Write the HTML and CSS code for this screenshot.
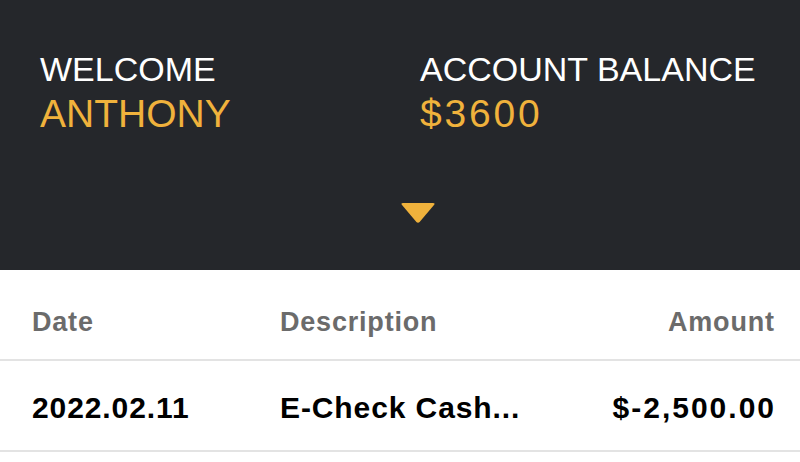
FILE: index.html
```html
<!DOCTYPE html>
<html>
<head>
<meta charset="utf-8">
<link rel="stylesheet" href="styles.css">
</head>
<body>
<header class="hero">
  <div class="stats">
    <div class="stat">
      <div class="label">WELCOME</div>
      <div class="value">ANTHONY</div>
    </div>
    <div class="stat">
      <div class="label">ACCOUNT BALANCE</div>
      <div class="value money">$3600</div>
    </div>
  </div>
  <div class="toggle">
    <svg width="36" height="22" viewBox="0 0 36 22"><path d="M3 1 H33 Q35.5 1 34 3 L19.6 20 Q18 21.6 16.4 20 L2 3 Q0.5 1 3 1 Z" fill="#f0b23c"/></svg>
  </div>
</header>
<section class="table">
  <div class="row head">
    <div class="c-date">Date</div>
    <div class="c-desc">Description</div>
    <div class="c-amt">Amount</div>
  </div>
  <div class="row">
    <div class="c-date">2022.02.11</div>
    <div class="c-desc">E-Check Cash...</div>
    <div class="c-amt">$-2,500.00</div>
  </div>
</section>
</body>
</html>
```
FILE: styles.css
```css
html, body { margin: 0; padding: 0; background: #fff; }
body { width: 800px; height: 462px; overflow: hidden; font-family: "Liberation Sans", Arial, sans-serif; }
.hero { background: #25272b; height: 270px; box-sizing: border-box; padding-top: 50px; display: flex; flex-direction: column; }
.stats { display: grid; grid-template-columns: 1fr 1fr; padding-left: 40px; }
.label { color: #fff; font-size: 34px; line-height: 38px; }
.value { color: #f0b23c; font-size: 39px; line-height: 44px; margin-top: 4px; }
.value.money { letter-spacing: 2.8px; }
.toggle { display: flex; justify-content: center; margin-top: 66px; padding-left: 36px; }
.toggle svg { display: block; }
.table { font-family: "Liberation Sans", Arial, sans-serif; }
.row { display: grid; grid-template-columns: 248px 1fr 220px; box-sizing: border-box; padding: 5px 26px 0 32px; height: 91px; align-items: center; border-bottom: 2px solid #e3e3e3; font-size: 30px; font-weight: 700; letter-spacing: 0.9px; color: #000; }
.row .c-amt { text-align: right; margin-right: -2px; letter-spacing: 2px; }
.row.head { height: 91px; padding-top: 15px; color: #6b6b6b; font-size: 27px; letter-spacing: 0.8px; }
.row.head .c-amt { margin-right: -0.8px; letter-spacing: 0.8px; }
```
